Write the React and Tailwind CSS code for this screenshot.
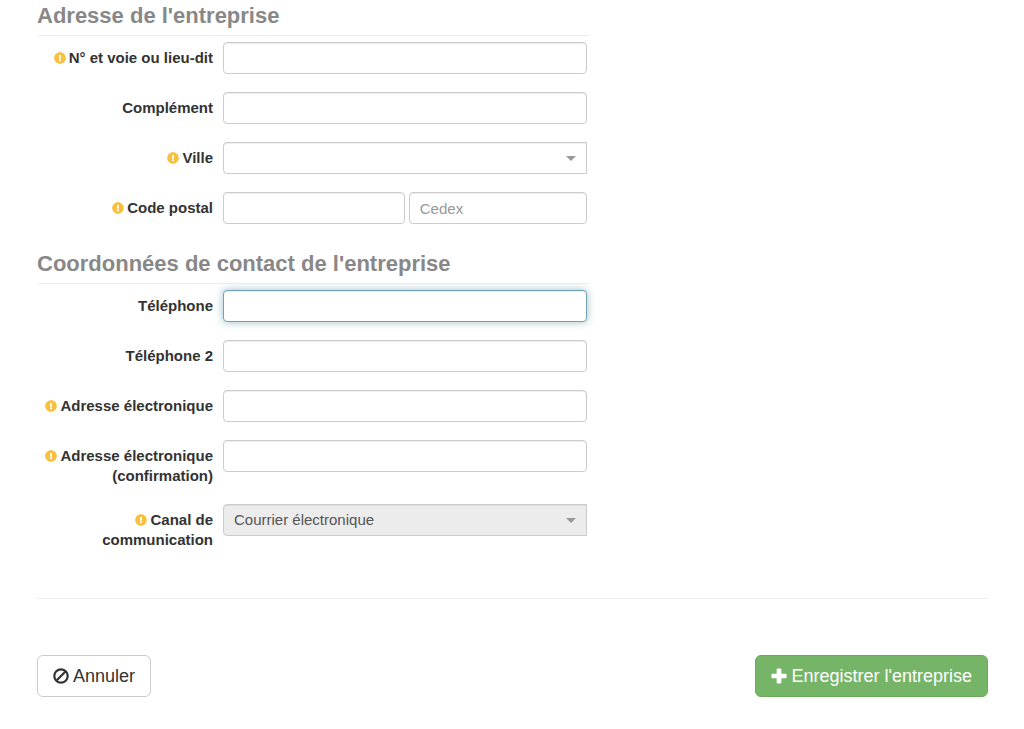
import { FaExclamationCircle } from "react-icons/fa";

const control =
  "block h-8 w-full min-w-0 rounded-[4px] border border-[#ccc] bg-white px-2.5 text-[15px] text-[#555] shadow-[inset_0_1px_1px_rgba(0,0,0,0.075)] outline-none placeholder:text-[#999] focus:border-[#6fa3b1] focus:shadow-[inset_0_1px_1px_rgba(0,0,0,0.075),0_0_8px_rgba(91,147,163,0.6)]";

function Field({ id, label, required, children }) {
  return (
    <div className="mb-[18px] flex items-start gap-2.5">
      <label
        htmlFor={id}
        className="w-44 shrink-0 pt-1.5 text-right text-[15px] leading-5 font-bold text-[#333]"
      >
        {required && (
          <FaExclamationCircle className="mr-[3px] mb-0.5 inline size-3 text-[#f9c03f]" aria-hidden="true" />
        )}
        {label}
      </label>
      <div className="min-w-0 flex-1">{children}</div>
    </div>
  );
}

function TextField({ id, label, required, type = "text", autoFocus }) {
  return (
    <Field id={id} label={label} required={required}>
      <input id={id} type={type} autoFocus={autoFocus} className={control} />
    </Field>
  );
}

function SelectBox({ id, disabled, children }) {
  return (
    <div className="relative">
      <select
        id={id}
        disabled={disabled}
        className="block h-8 w-full appearance-none rounded-l-[4px] border border-[#ccc] bg-white pr-8 pl-2.5 text-[15px] text-[#555] opacity-100 shadow-[inset_0_1px_1px_rgba(0,0,0,0.075)] outline-none disabled:bg-[#ececec]"
      >
        {children}
      </select>
      <svg
        className="pointer-events-none absolute top-3.5 right-[11px] h-[5px] w-2.5 text-[#999]"
        viewBox="0 0 10 5"
        fill="currentColor"
        aria-hidden="true"
      >
        <path d="M0 0h10L5 5z" />
      </svg>
    </div>
  );
}

function SectionTitle({ children }) {
  return (
    <h2 className="mb-1.5 border-b border-[#eee] pb-1 text-[22px] leading-[31px] font-bold text-[#888]">
      {children}
    </h2>
  );
}

function BanIcon() {
  return (
    <svg className="size-4" viewBox="0 0 16 16" fill="none" stroke="currentColor" strokeWidth="2.2" aria-hidden="true">
      <circle cx="8" cy="8" r="6.7" />
      <path d="M3.3 12.7L12.7 3.3" />
    </svg>
  );
}

function PlusIcon() {
  return (
    <svg className="size-4" viewBox="0 0 15 15" fill="currentColor" aria-hidden="true">
      <rect x="5.3" y="0.4" width="4.4" height="14.2" rx="1" />
      <rect x="0.4" y="5.3" width="14.2" height="4.4" rx="1" />
    </svg>
  );
}

export default function App() {
  return (
    <form
      className="bg-white pr-9 pb-8 pl-[37px] font-['Liberation_Sans',Arial,sans-serif]"
      onSubmit={(e) => e.preventDefault()}
    >
      <div className="w-[58%]">
        <section>
          <SectionTitle>Adresse de l'entreprise</SectionTitle>
          <div className="pr-0.5">
            <TextField id="voie" label="N° et voie ou lieu-dit" required />
            <TextField id="complement" label="Complément" />
            <Field id="ville" label="Ville" required>
              <SelectBox id="ville">
                <option></option>
              </SelectBox>
            </Field>
            <Field id="code-postal" label="Code postal" required>
              <div className="grid grid-cols-[91fr_89fr] gap-1">
                <input id="code-postal" type="text" className={control} />
                <input type="text" aria-label="Cedex" placeholder="Cedex" className={control} />
              </div>
            </Field>
          </div>
        </section>
        <section className="pt-1.5">
          <SectionTitle>Coordonnées de contact de l'entreprise</SectionTitle>
          <div className="pr-0.5">
            <TextField id="telephone" label="Téléphone" type="tel" autoFocus />
            <TextField id="telephone-2" label="Téléphone 2" type="tel" />
            <TextField id="email" label="Adresse électronique" type="email" required />
            <TextField id="email-confirmation" label="Adresse électronique (confirmation)" type="email" required />
            <Field id="canal" label="Canal de communication" required>
              <SelectBox id="canal" disabled>
                <option>Courrier électronique</option>
              </SelectBox>
            </Field>
          </div>
        </section>
      </div>
      <hr className="mt-12 border-[#eee]" />
      <div className="mt-14 flex items-center justify-between">
        <button
          type="button"
          className="flex h-[42px] items-center gap-1 rounded-[6px] border border-[#ccc] bg-white px-[15px] text-[18px] text-[#333]"
        >
          <BanIcon />
          Annuler
        </button>
        <button
          type="submit"
          className="flex h-[42px] items-center gap-1 rounded-[6px] border border-[#67ad58] bg-[#76b568] px-[15px] text-[18px] text-white"
        >
          <PlusIcon />
          Enregistrer l'entreprise
        </button>
      </div>
    </form>
  );
}
